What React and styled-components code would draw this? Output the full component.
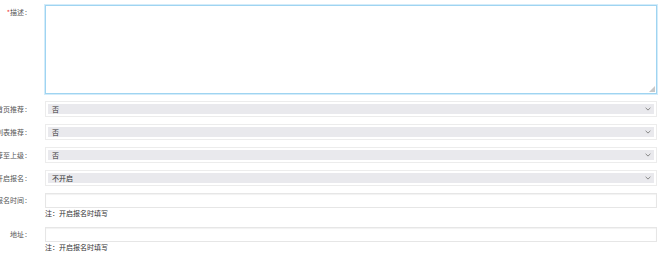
import React from 'react'
import styled, { createGlobalStyle } from 'styled-components';

const GlobalStyle = createGlobalStyle`
  html, body {
    margin: 0;
    padding: 0;
    background: #fff;
    overflow: hidden;
  }
  body {
    font-family: "Noto Sans CJK SC", "Noto Sans", sans-serif;
  }
`;

const Form = styled.div`
  width: 667px;
  height: 258px;
  padding-top: 5px;
  box-sizing: border-box;
`;

const Row = styled.div`
  display: grid;
  grid-template-columns: 28px 612px;
  column-gap: 17px;
  align-items: start;
  margin-bottom: ${p => p.gap || 7}px;
`;

const Label = styled.div`
  display: flex;
  justify-content: flex-end;
  padding-right: 1px;
  font-size: 7px;
  line-height: ${p => p.lh || 16}px;
  color: #555;
  white-space: nowrap;
  > em {
    color: #e33;
    font-style: normal;
  }
  > i {
    font-style: normal;
    margin-left: 1px;
  }
`;

const Area = styled.div`
  height: 89px;
  box-sizing: border-box;
  border: 1px solid #9fd4f1;
  box-shadow: 0 0 0 1px #d3ecfa;
  background: #fff;
  position: relative;
`;

const Grip = styled.svg`
  position: absolute;
  right: 1px;
  bottom: 1px;
`;

const SelectWrap = styled.div`
  height: 16px;
  box-sizing: border-box;
  border: 1px solid #ececec;
  padding: 2px 2px;
  background: #fff;
`;

const SelectBox = styled.div`
  height: 10px;
  background: #e9e9ed;
  display: flex;
  align-items: center;
  justify-content: space-between;
  padding: 0 3px 0 4px;
  font-size: 7px;
  color: #333;
`;

const Input = styled.div`
  height: 15px;
  box-sizing: border-box;
  border: 1px solid #e6e6e6;
  box-shadow: inset 0 1px 1px #f2f2f2;
  background: #fff;
`;

const Note = styled.div`
  font-size: 7px;
  line-height: 11px;
  color: #333;
  white-space: nowrap;
`;

function Chevron() {
  return (
    <svg width="6" height="4" viewBox="0 0 6 4">
      <path d="M0.6 0.8 L3 3.1 L5.4 0.8" fill="none" stroke="#888" strokeWidth="1" />
    </svg>
  )
}

function SelectRow({ label, value }) {
  return (
    <Row>
      <Label>{label}<i>:</i></Label>
      <SelectWrap>
        <SelectBox>
          <span>{value}</span>
          <Chevron />
        </SelectBox>
      </SelectWrap>
    </Row>
  )
}

function InputRow({ label, note, gap }) {
  return (
    <Row gap={gap}>
      <Label lh={15}>{label}<i>:</i></Label>
      <div>
        <Input />
        <Note>{note}</Note>
      </div>
    </Row>
  )
}

export default function App() {
  return (
    <Form>
      <GlobalStyle />
      <Row>
        <Label lh={14}><em>*</em>描述<i>:</i></Label>
        <Area>
          <Grip width="6" height="6" viewBox="0 0 6 6">
            <path d="M6 0 L6 6 L0 6 Z" fill="#c8c8c8" />
          </Grip>
        </Area>
      </Row>
      <SelectRow label="首页推荐" value="否" />
      <SelectRow label="列表推荐" value="否" />
      <SelectRow label="推荐至上级" value="否" />
      <SelectRow label="开启报名" value="不开启" />
      <InputRow label="报名时间" note="注：开启报名时填写" gap={8} />
      <InputRow label="地址" note="注：开启报名时填写" />
    </Form>
  )
}
